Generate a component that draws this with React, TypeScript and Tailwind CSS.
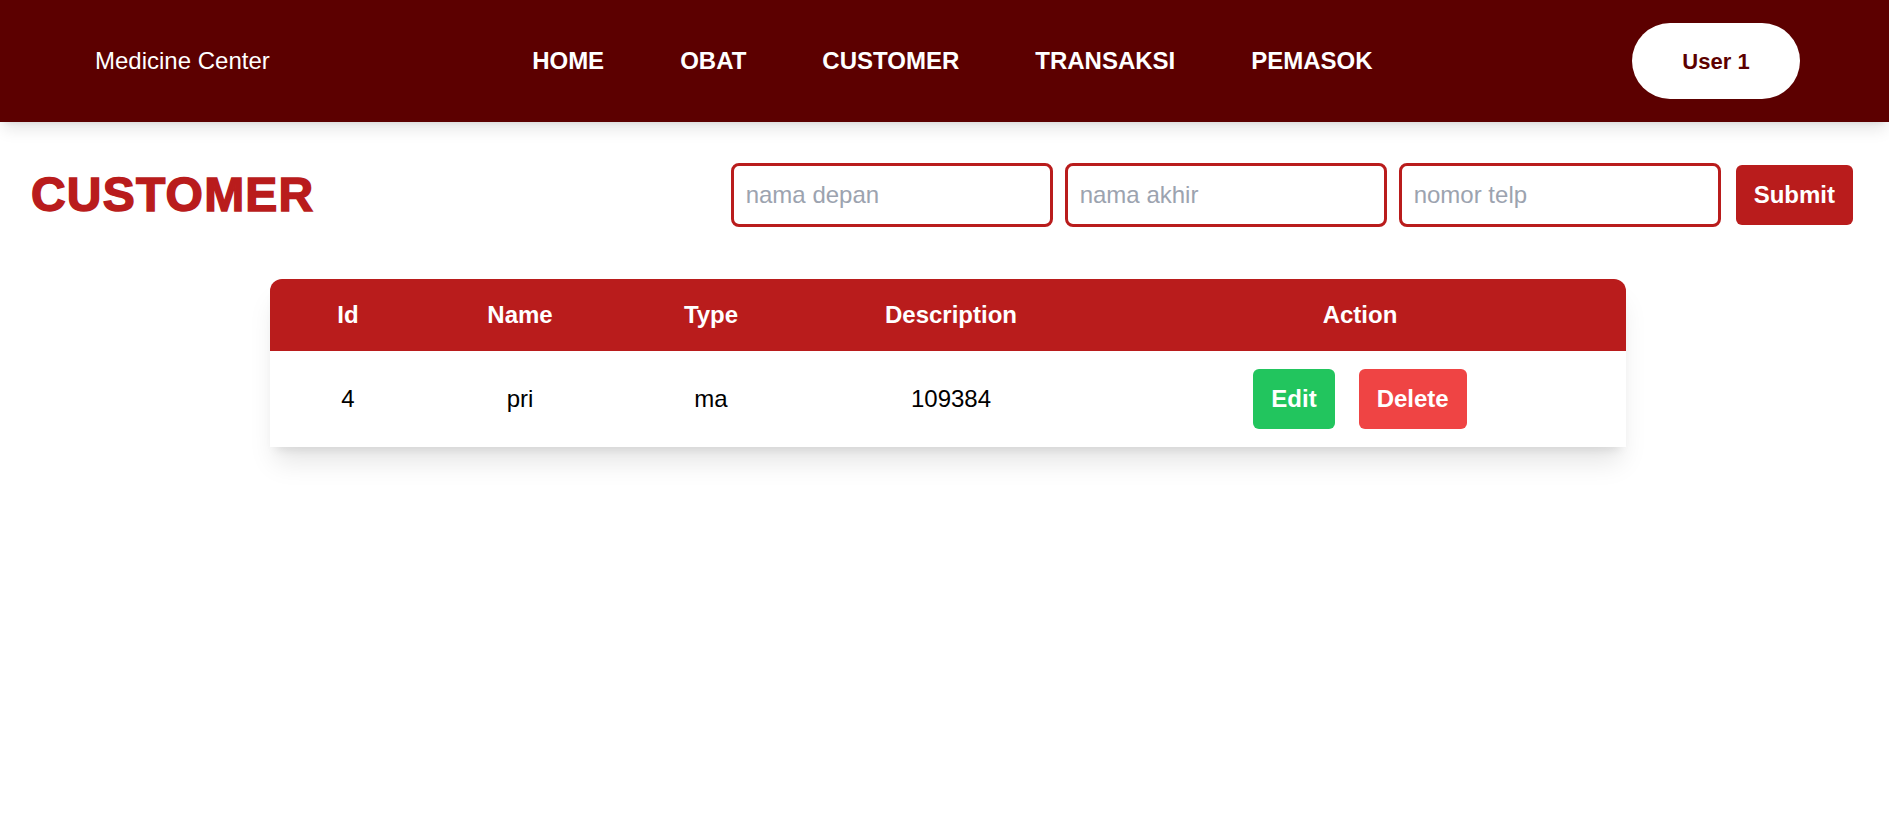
import React from "react";

const font = { fontFamily: '"Liberation Sans", Arial, sans-serif' };

export default function App() {
  const navItems = ["HOME", "OBAT", "CUSTOMER", "TRANSAKSI", "PEMASOK"];
  return (
    <div className="min-h-screen bg-white" style={font}>
      <nav className="relative z-10 flex h-[122px] items-center bg-[#5c0000] pl-[95px] pr-[89px] shadow-lg">
        <div className="text-2xl text-white">Medicine Center</div>
        <div className="flex-1" />
        <div className="ml-[3px] flex gap-[76px]">
          {navItems.map((n) => (
            <a key={n} className="text-2xl font-bold text-white">
              {n}
            </a>
          ))}
        </div>
        <div className="flex-1" />
        <button className="flex h-[76px] w-[168px] items-center justify-center rounded-full bg-white text-[22px] font-bold text-[#5c0000]">
          User 1
        </button>
      </nav>

      <div className="flex items-center justify-between pl-[31px] pr-[36px] pt-[41px]">
        <h1 className="text-5xl font-black tracking-[1.2px] text-[#b91c1c] [-webkit-text-stroke:1.5px_#b91c1c]">
          CUSTOMER
        </h1>
        <div className="flex items-center">
          <div className="flex gap-3">
            <input
              placeholder="nama depan"
              className="h-[64px] w-[322px] rounded-lg border-[3px] border-[#b91c1c] px-[12px] text-2xl text-black outline-none placeholder:text-[#9ca3af]"
            />
            <input
              placeholder="nama akhir"
              className="h-[64px] w-[322px] rounded-lg border-[3px] border-[#b91c1c] px-[12px] text-2xl text-black outline-none placeholder:text-[#9ca3af]"
            />
            <input
              placeholder="nomor telp"
              className="h-[64px] w-[322px] rounded-lg border-[3px] border-[#b91c1c] px-[12px] text-2xl text-black outline-none placeholder:text-[#9ca3af]"
            />
          </div>
          <button className="ml-[15px] h-[60px] rounded-md bg-[#b91c1c] px-[18px] text-2xl font-bold text-white">
            Submit
          </button>
        </div>
      </div>

      <div className="ml-[270px] mt-[52px] w-[1356px] shadow-xl">
        <table className="w-full table-fixed border-collapse text-2xl">
          <colgroup>
            <col className="w-[156px]" />
            <col className="w-[188px]" />
            <col className="w-[194px]" />
            <col className="w-[286px]" />
            <col />
          </colgroup>
          <thead>
            <tr className="h-[72px] bg-[#b91c1c] text-white">
              <th className="rounded-tl-xl font-bold">Id</th>
              <th className="font-bold">Name</th>
              <th className="font-bold">Type</th>
              <th className="font-bold">Description</th>
              <th className="rounded-tr-xl font-bold">Action</th>
            </tr>
          </thead>
          <tbody>
            <tr className="h-[96px] bg-white text-black">
              <td className="text-center">4</td>
              <td className="text-center">pri</td>
              <td className="text-center">ma</td>
              <td className="text-center">109384</td>
              <td>
                <div className="flex items-center justify-center gap-6">
                  <button className="h-[60px] rounded-md bg-[#22c55e] px-[18px] font-bold text-white">
                    Edit
                  </button>
                  <button className="h-[60px] rounded-md bg-[#ef4444] px-[18px] font-bold text-white">
                    Delete
                  </button>
                </div>
              </td>
            </tr>
          </tbody>
        </table>
      </div>
    </div>
  );
}
